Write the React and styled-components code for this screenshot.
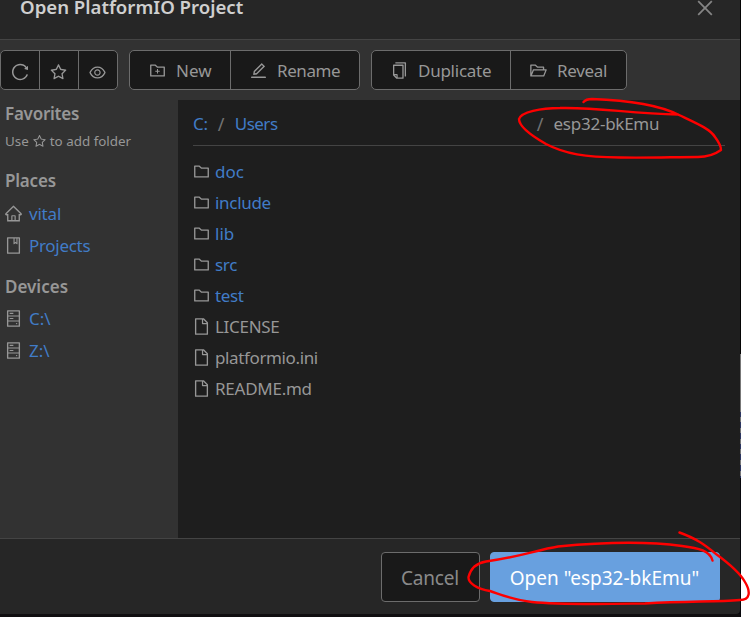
import React from "react";
import styled, { createGlobalStyle } from "styled-components";
import {
  AiOutlineReload, AiOutlineStar, AiOutlineEye, AiOutlineFolderAdd, AiOutlineEdit,
  AiOutlineCopy, AiOutlineFolderOpen, AiOutlineHome, AiOutlineBook, AiOutlineHdd,
  AiOutlineFolder, AiOutlineFile, AiOutlineClose,
} from "react-icons/ai";

const GlobalStyle = createGlobalStyle`
  * { box-sizing: border-box; }
  body { margin: 0; background: #fff; overflow: hidden; font-family: "Noto Sans", "Open Sans", sans-serif; }
  svg { flex: none; display: block; }
`;

const Screen = styled.div`
  position: relative;
  width: 750px;
  height: 617px;
  overflow: hidden;
`;
const Backdrop = styled.div`
  width: 741px;
  height: 617px;
  padding-right: 1px;
  background:
    linear-gradient(to bottom, #050505 354px, transparent 354px, transparent 478px, #08080c 478px),
    linear-gradient(to bottom, #777 412px, transparent 412px),
    repeating-linear-gradient(to bottom, #777 0 5px, #2c3560 5px 10.7px);
`;
const Dialog = styled.div`
  display: flex;
  flex-direction: column;
  height: 614px;
  background: #262626;
  border-bottom-right-radius: 4px;
  color: #979797;
  font-size: 17px;
`;
const Strip = styled.div`
  height: 3px;
  background: #100e10;
`;
const Header = styled.header`
  display: flex;
  justify-content: space-between;
  height: 40px;
  padding: 0 24px 0 20px;
  border-bottom: 1px solid #444;
`;
const Text = styled.span`
  letter-spacing: ${(p) => p.$ls || 0}px;
  white-space: pre;
`;
const Title = styled(Text)`
  height: 14px;
  line-height: 14px;
  font-size: 18.6px;
  font-weight: 600;
  color: #cfcfcf;
`;
const CloseButton = styled.span`
  margin-top: -3px;
  color: #858585;
`;
const Toolbar = styled.div`
  display: flex;
  gap: 11px;
  height: 60px;
  padding-top: 10px;
  background: #323232;
`;
const ButtonGroup = styled.div`
  display: flex;
  height: 40px;
  border: 1px solid #6c6c6c;
  border-radius: 5px;
  background: #191919;
  overflow: hidden;
`;
const ToolButton = styled.div`
  display: flex;
  align-items: center;
  justify-content: ${(p) => (p.$icon ? "center" : "flex-start")};
  width: ${(p) => p.$w}px;
  padding: ${(p) => (p.$icon ? "4px 1px 0 0" : "0 0 0 18px")};
  gap: 9px;
  & + & { border-left: 1px solid #6c6c6c; }
`;
const Body = styled.div`
  display: flex;
  height: 438px;
`;
const Sidebar = styled.aside`
  width: 178px;
  padding: 0 5px;
  background: #323232;
`;
const SideHeading = styled.div`
  height: ${(p) => p.$h || 30}px;
  line-height: 28px;
  margin-top: ${(p) => p.$mt || 0}px;
  font-weight: 600;
`;
const Hint = styled.div`
  display: flex;
  align-items: center;
  gap: 3px;
  height: 22px;
  font-size: 13.4px;
`;
const SideItem = styled.div`
  display: flex;
  align-items: center;
  gap: 6px;
  height: 32px;
  margin-left: -1px;
`;
const Link = styled(Text)`
  color: #417cc7;
`;
const Main = styled.main`
  flex: 1;
  padding: 0 15px;
  background: #1e1e1e;
`;
const Breadcrumb = styled.nav`
  display: flex;
  align-items: center;
  height: 46px;
  padding-top: 2px;
  border-bottom: 1px solid #444;
`;
const Slash = styled.span`
  width: 27px;
  text-align: center;
  font-size: 18px;
  color: #737373;
`;
const Gap = styled.span`
  flex: 0 0 ${(p) => p.$w}px;
`;
const FileList = styled.div`
  padding-top: 10px;
`;
const FileRow = styled.div`
  display: flex;
  align-items: center;
  gap: 4px;
  height: 31px;
  margin-left: -1px;
`;
const Footer = styled.footer`
  display: flex;
  justify-content: flex-end;
  gap: 10px;
  flex: 1;
  padding: 13px 20px 0 0;
  border-top: 1px solid #444;
  font-size: 19px;
`;
const FooterButton = styled.div`
  display: flex;
  align-items: center;
  justify-content: center;
  width: ${(p) => p.$w}px;
  height: 50px;
  padding: 2px 1px 0 0;
  border-radius: 4px;
  border: 1px solid ${(p) => (p.$primary ? "#68a0df" : "#6c6c6c")};
  background: ${(p) => (p.$primary ? "#68a0df" : "#191919")};
  color: ${(p) => (p.$primary ? "#fff" : "#8a8a8a")};
`;
const Ink = styled.svg`
  position: absolute;
  inset: 0;
  fill: none;
  stroke: #fe0000;
  stroke-width: 2.4;
  stroke-linecap: round;
  stroke-linejoin: round;
`;

const folders = [["doc", 0], ["include", -0.3], ["lib", 0], ["src", -0.3], ["test", -0.4]];
const files = [["LICENSE", -0.3], ["platformio.ini", -0.37], ["README.md", -0.25]];

export default function App() {
  return (
    <Screen>
      <GlobalStyle />
      <Backdrop>
        <Dialog>
          <Header>
            <Title>Open PlatformIO Project</Title>
            <CloseButton><AiOutlineClose size={22} /></CloseButton>
          </Header>
          <Toolbar>
            <ButtonGroup>
              <ToolButton $icon $w={38}><AiOutlineReload size={20} /></ToolButton>
              <ToolButton $icon $w={39}><AiOutlineStar size={19} /></ToolButton>
              <ToolButton $icon $w={39}><AiOutlineEye size={19} /></ToolButton>
            </ButtonGroup>
            <ButtonGroup>
              <ToolButton $w={100}><AiOutlineFolderAdd size={19} /><Text>New</Text></ToolButton>
              <ToolButton $w={129}><AiOutlineEdit size={19} /><Text $ls={-0.4}>Rename</Text></ToolButton>
            </ButtonGroup>
            <ButtonGroup>
              <ToolButton $w={138}><AiOutlineCopy size={19} /><Text $ls={-0.25}>Duplicate</Text></ToolButton>
              <ToolButton $w={116}><AiOutlineFolderOpen size={19} /><Text $ls={-0.3}>Reveal</Text></ToolButton>
            </ButtonGroup>
          </Toolbar>
          <Body>
            <Sidebar>
              <SideHeading><Text $ls={-0.25}>Favorites</Text></SideHeading>
              <Hint><Text>Use</Text><AiOutlineStar size={15} /><Text>to add folder</Text></Hint>
              <SideHeading $mt={15}><Text $ls={-0.2}>Places</Text></SideHeading>
              <SideItem><AiOutlineHome size={19} /><Link $ls={-0.2}>vital</Link></SideItem>
              <SideItem><AiOutlineBook size={19} /><Link $ls={-0.3}>Projects</Link></SideItem>
              <SideHeading $mt={12} $h={29}><Text>Devices</Text></SideHeading>
              <SideItem><AiOutlineHdd size={19} /><Link>C:\</Link></SideItem>
              <SideItem><AiOutlineHdd size={19} /><Link>Z:\</Link></SideItem>
            </Sidebar>
            <Main>
              <Breadcrumb>
                <Link $ls={-0.3}>C:</Link><Slash>/</Slash><Link $ls={-0.5}>Users</Link>
                <Gap $w={249} />
                <Slash>/</Slash><Text $ls={-0.25}>esp32-bkEmu</Text>
              </Breadcrumb>
              <FileList>
                {folders.map(([name, ls]) => (
                  <FileRow key={name}><AiOutlineFolder size={19} /><Link $ls={ls}>{name}</Link></FileRow>
                ))}
                {files.map(([name, ls]) => (
                  <FileRow key={name}><AiOutlineFile size={19} /><Text $ls={ls}>{name}</Text></FileRow>
                ))}
              </FileList>
            </Main>
          </Body>
          <Footer>
            <FooterButton $w={99}><Text $ls={-0.15}>Cancel</Text></FooterButton>
            <FooterButton $w={230} $primary><Text>Open "esp32-bkEmu"</Text></FooterButton>
          </Footer>
        </Dialog>
        <Strip />
      </Backdrop>
      <Ink width="750" height="617" viewBox="0 0 750 617">
        <path d="M583.5 102 Q586 99 592 99 C622 100 655 103 679 115 C698 124 710 129 715 137 Q721 145 721 150 C714 155 708 157 698 157 C675 157 650 158 620 157.5 C585 157 565 154 546 144 C532 136 519 127 519 119 C521 112 541 108 560 108 C600 107 630 114 678 114.500" />
        <path d="M679.500 532.500 C700 540 707 547 716 554 C731 565 740 573 745 582 C751 592 750 600 740 600 C715 602 690 601 645 603.500 C605 604 560 605 532 602 C513 600 502 595 490 591 C477 589 468 583 468.500 577 C471 567 477 563 486 561.500 C519 557 537 550 558 546.500 C595 543 645 541 682 546 C699 548 710 551 712.500 560.500" />
      </Ink>
    </Screen>
  );
}
